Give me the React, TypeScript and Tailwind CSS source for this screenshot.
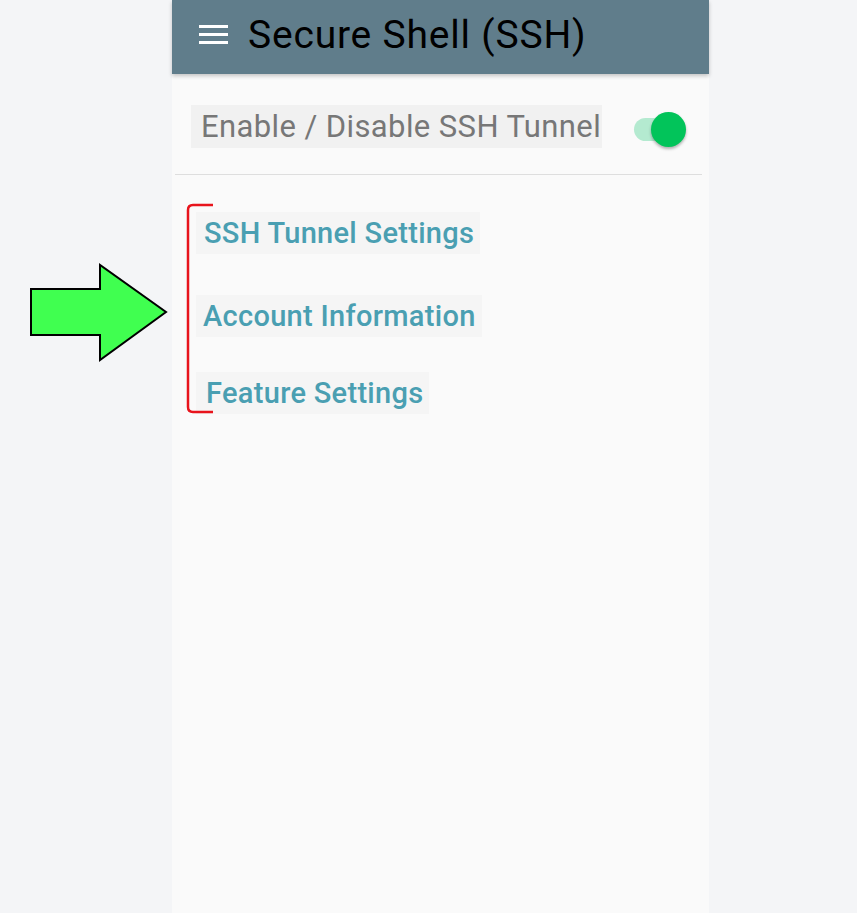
import React from "react";

const items = [
  { label: "SSH Tunnel Settings", pad: "pl-[8px]", mt: "mt-0" },
  { label: "Account Information", pad: "pl-[7px]", mt: "mt-[41px]" },
  { label: "Feature Settings", pad: "pl-[10px]", mt: "mt-[35px]" },
];

function Hamburger() {
  return (
    <svg width="30" height="22" viewBox="0 0 30 22" className="shrink-0">
      <rect x="0" y="2" width="29" height="3" fill="#fff" />
      <rect x="0" y="10" width="29" height="3" fill="#fff" />
      <rect x="0" y="18" width="29" height="3" fill="#fff" />
    </svg>
  );
}

function Toggle() {
  return (
    <div className="relative w-[56px] h-[36px] shrink-0 mt-[6px]">
      <div className="absolute left-[1px] top-[6px] w-[40px] h-[23px] rounded-full bg-[#b4ead0]" />
      <div className="absolute left-[18px] top-0 w-[35px] h-[35px] rounded-full bg-[#02c45a] shadow-[0_2px_3px_rgba(0,0,0,0.3)]" />
    </div>
  );
}

// annotation overlays: green arrow + red bracket
function Arrow() {
  return (
    <svg className="absolute left-[29px] top-[263px]" width="140" height="100" viewBox="29 263 140 100">
      <polygon
        points="31,289 100,289 100,265 166,312 100,360 100,335 31,335"
        fill="#40ff50"
        stroke="#000"
        strokeWidth="2"
        strokeLinejoin="miter"
      />
    </svg>
  );
}

function Bracket() {
  return (
    <svg className="absolute left-[184px] top-[202px]" width="32" height="214" viewBox="184 202 32 214">
      <path
        d="M213,205 L193,205 Q188,205 188,210 L188,407 Q188,412 193,412 L213,412"
        fill="none"
        stroke="#e8141c"
        strokeWidth="2.5"
      />
    </svg>
  );
}

export default function App() {
  return (
    <div className="relative min-h-screen w-full bg-[#f4f5f7] font-['Roboto','Liberation_Sans',sans-serif]">
      <div className="ml-[172px] w-[537px] min-h-[913px] bg-[#fafafa] flex flex-col">
        {/* App bar */}
        <div className="h-[74px] bg-[#607d8b] flex items-center pl-[27px] gap-[19px] shadow-[0_2px_4px_rgba(0,0,0,0.22)] z-10">
          <div className="mt-[-6px]">
            <Hamburger />
          </div>
          <div className="text-[39px] leading-none text-black mt-[-4px] tracking-[0.8px]">Secure Shell (SSH)</div>
        </div>

        {/* Toggle row */}
        <div className="flex items-center justify-between pl-[16px] pr-[13px] pt-[31px] pb-[26px] border-b border-[#dedede] ml-[3px] mr-[7px]">
          <div className="bg-[#f1f1f1] h-[43px] flex items-center pl-[10px] pr-[1px] text-[31px] leading-none text-[#777777] tracking-[0.4px]">
            Enable / Disable SSH Tunnel
          </div>
          <Toggle />
        </div>

        {/* Section links */}
        <div className="flex flex-col items-start pl-[24px] pt-[37px]">
          {items.map((it) => (
            <div
              key={it.label}
              className={`${it.mt} ${it.pad} pr-[6px] h-[42px] flex items-center bg-[#f5f5f5] text-[29px] font-medium leading-none text-[#4a9fb2] tracking-[0.3px]`}
            >
              {it.label}
            </div>
          ))}
        </div>
      </div>

      <Arrow />
      <Bracket />
    </div>
  );
}
